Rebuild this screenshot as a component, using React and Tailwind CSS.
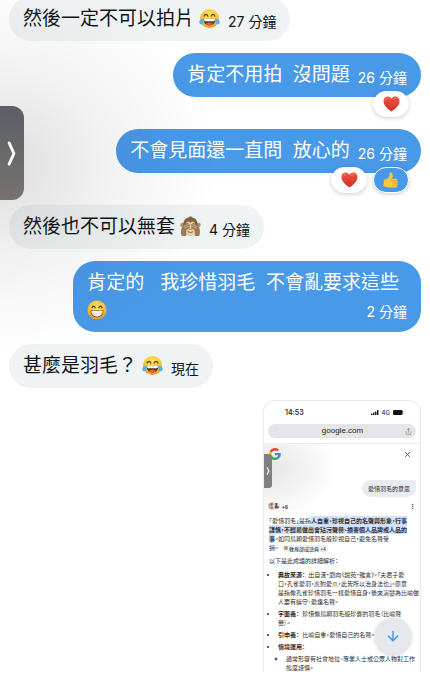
import clsx from "clsx";
import { ArrowDown, EllipsisVertical, Share, X } from "lucide-react";

function FaceGradient({ id }) {
  return (
    <defs>
      <radialGradient id={id} cx="50%" cy="35%" r="65%">
        <stop offset="0" stopColor="#ffe56b" />
        <stop offset="0.6" stopColor="#fcc934" />
        <stop offset="1" stopColor="#e8952b" />
      </radialGradient>
    </defs>
  );
}

function JoyEmoji({ className }) {
  return (
    <svg viewBox="0 0 42 40" className={className} role="img" aria-label="joy">
      <FaceGradient id="joy-face" />
      <circle cx="21" cy="20" r="19" fill="url(#joy-face)" />
      <path d="M10 15.500c2-5 6-5 8 0M24 15.500c2-5 6-5 8 0" fill="none" stroke="#653b12" strokeWidth="2.400" strokeLinecap="round" />
      <path d="M9 20.500h24c0 8-5 13.500-12 13.500S9 28.500 9 20.500z" fill="#5b3412" />
      <path d="M10 20.500h22c0 3-1 4.500-2 5H12c-1-.5-2-2-2-5z" fill="#fff" />
      <path d="M14 31c4-4 10-4 14 0-4 4-10 4-14 0z" fill="#e65848" />
      <path d="M9 20c-6 1-8.500 4-8.500 7.500S5 33 7.500 30.500 9 24 9 20z" fill="#4fb4ec" />
      <path d="M33 20c6 1 8.500 4 8.500 7.500S37 33 34.500 30.500 33 24 33 20z" fill="#4fb4ec" />
    </svg>
  );
}

function GrinEmoji({ className }) {
  return (
    <svg viewBox="0 0 40 40" className={className} role="img" aria-label="grin">
      <FaceGradient id="grin-face" />
      <circle cx="20" cy="20" r="19" fill="url(#grin-face)" />
      <path d="M10 15.500c1.500-4.500 5-4.500 6.500 0M23.500 15.500c1.500-4.500 5-4.500 6.500 0" fill="none" stroke="#653b12" strokeWidth="2.600" strokeLinecap="round" />
      <path d="M7 20.500h26c0 9-5 14-13 14s-13-5-13-14z" fill="#734113" />
      <path d="M8.500 21.500h23c-.5 7-4.500 11.500-11.500 11.500S9 28.500 8.500 21.500z" fill="#fff" />
      <path d="M9.500 26.500h21M14.500 22v9.500M20 22v11M25.500 22v9.500" stroke="#c9c4bc" strokeWidth="0.800" />
    </svg>
  );
}

function MonkeyEmoji({ className }) {
  return (
    <svg viewBox="0 0 40 40" className={className} role="img" aria-label="see no evil">
      <circle cx="4.500" cy="17" r="4" fill="#b8946c" />
      <circle cx="35.500" cy="17" r="4" fill="#b8946c" />
      <path d="M20 1c2 0 3 1 3 2 7 1 11 7 11 15 0 11-5 19-14 19S6 29 6 18C6 10 10 4 17 3c0-1 1-2 3-2z" fill="#80603f" />
      <path d="M11 17c0-7 6-8 9-4 3-4 9-3 9 4 0 4 3 7 3 11 0 6-6 9-12 9S8 34 8 28c0-4 3-7 3-11z" fill="#ecd0a0" />
      <path d="M3 38c-2-9-1-16 3-21l8-4c2 0 3 1 2 2l3 1c1 1 0 2-1 3l1 2-2 3-4 2c-2 3-1 8-1 12z" fill="#9c7a58" />
      <path d="M37 38c2-9 1-16-3-21l-8-4c-2 0-3 1-2 2l-3 1c-1 1 0 2 1 3l-1 2 2 3 4 2c2 3 1 8 1 12z" fill="#9c7a58" />
      <path d="M8 20l8-4M9 23l9-4M32 20l-8-4M31 23l-9-4" stroke="#d6b88c" strokeWidth="1.500" strokeLinecap="round" />
      <path d="M18 25h1M21.500 25h1" stroke="#5e4028" strokeWidth="1.500" strokeLinecap="round" />
      <path d="M15.500 30c3 2 6 2 9 0" fill="none" stroke="#704923" strokeWidth="1.500" strokeLinecap="round" />
    </svg>
  );
}

function HeartEmoji({ className }) {
  return (
    <svg viewBox="0 0 36 34" className={className} role="img" aria-label="heart">
      <defs>
        <linearGradient id="heart-fill" x1="0" y1="0" x2="0" y2="1">
          <stop offset="0" stopColor="#f0543f" />
          <stop offset="1" stopColor="#cf2f26" />
        </linearGradient>
      </defs>
      <path d="M18 33C10 27 1 20 1 11 1 5 5 1 10 1c4 0 6.500 2 8 5 1.500-3 4-5 8-5 5 0 9 4 9 10 0 9-9 16-17 22z" fill="url(#heart-fill)" />
      <path d="M5 9c1-3 3-5 6-4.500M22 8c1-2 3-3.500 6-3" fill="none" stroke="#f98a78" strokeWidth="1.800" strokeLinecap="round" />
    </svg>
  );
}

function ThumbEmoji({ className }) {
  return (
    <svg viewBox="0 0 36 36" className={className} role="img" aria-label="thumbs up">
      <path d="M2 18c4-1 8-2 10-5 3-4 3-7 3-11 4-2 7 1 7 6 0 3-1 5-1 7h8c4 0 4 5 1 5 5 0 4 5 1 5 3 0 3 4 0 5 2 1 1 5-2 5H15C9 35 6 32 1 32z" fill="#fcc93a" />
      <path d="M22 20h8M22 25h9M22 30h8M21 15c-3 1-4 3-3 5" fill="none" stroke="#dc8b25" strokeWidth="1.500" strokeLinecap="round" />
    </svg>
  );
}

function GoogleLogo() {
  return (
    <svg viewBox="0 0 48 48" className="size-3" role="img" aria-label="Google">
      <path fill="#EA4335" d="M24 9.500c3.540 0 6.710 1.220 9.210 3.600l6.850-6.850C35.900 2.380 30.470 0 24 0 14.620 0 6.510 5.380 2.560 13.220l7.980 6.190C12.430 13.720 17.740 9.500 24 9.500z" />
      <path fill="#4285F4" d="M46.980 24.550c0-1.570-.15-3.090-.38-4.550H24v9.020h12.940c-.58 2.960-2.260 5.480-4.780 7.180l7.730 6c4.510-4.180 7.090-10.360 7.090-17.650z" />
      <path fill="#FBBC05" d="M10.530 28.590c-.48-1.450-.76-2.990-.76-4.590s.27-3.140.76-4.590l-7.980-6.190C.92 16.460 0 20.120 0 24c0 3.880.92 7.540 2.560 10.780l7.970-6.190z" />
      <path fill="#34A853" d="M24 48c6.480 0 11.930-2.130 15.890-5.810l-7.730-6c-2.150 1.450-4.920 2.300-8.160 2.300-6.260 0-11.570-4.220-13.470-9.910l-7.980 6.190C6.510 42.620 14.620 48 24 48z" />
    </svg>
  );
}

function SourceBadge() {
  return (
    <svg viewBox="0 0 36 24" className="h-2 w-3 shrink-0" aria-hidden="true">
      <circle cx="12" cy="12" r="11.500" fill="#d9b9a4" />
      <path d="M4 9c4-5 9-4 12 0M6 16c3 3 6 3 9-1M11 7v6" stroke="#6d4939" strokeWidth="2.500" fill="none" />
      <circle cx="25" cy="12" r="10.500" fill="#ded9d5" />
      <path d="M22 3v9l-3 7h12l2-5-6-3 1-8" fill="#5c4e4a" />
    </svg>
  );
}

function PhoneStatus() {
  return (
    <div className="flex h-[23px] items-center justify-between pr-4 pl-[21px] font-['Inter',sans-serif]">
      <span className="text-[7px] leading-[9px] font-semibold">14:53</span>
      <div className="flex items-center gap-[3px]">
        <svg viewBox="0 0 16 10" className="h-[5px] w-2" aria-hidden="true">
          <path d="M0 7h3v3H0zM4 5h3v5H4zM8 3h3v7H8zM12 0h3v10h-3z" fill="#222" />
        </svg>
        <span className="text-[6px] leading-[9px] font-medium">4G</span>
        <svg viewBox="0 0 24 11" className="h-[5px] w-[11px]" aria-hidden="true">
          <rect width="21" height="11" rx="3" fill="#111" />
          <path d="M22.500 3.500v4" stroke="#999" strokeWidth="1.500" />
        </svg>
      </div>
    </div>
  );
}

const messages = [
  { text: "然後一定不可以拍片", Emoji: JoyEmoji, time: "27 分鐘" },
  { text: "肯定不用拍  沒問題", time: "26 分鐘", mine: true, reactions: ["heart"] },
  { text: "不會見面還一直問  放心的", time: "26 分鐘", mine: true, reactions: ["heart", "thumb"] },
  { text: "然後也不可以無套", Emoji: MonkeyEmoji, time: "4 分鐘" },
  { text: "肯定的   我珍惜羽毛  不會亂要求這些", Emoji: GrinEmoji, time: "2 分鐘", mine: true, long: true },
  { text: "甚麼是羽毛？", Emoji: JoyEmoji, time: "現在" },
];

function Reaction({ kind }) {
  return (
    <button
      type="button"
      className={clsx(
        "flex h-[26px] w-9 items-center justify-center rounded-full border shadow-[0_1px_4px_rgba(0,0,0,0.2)]",
        kind === "thumb" ? "border-white bg-[#4999e9]" : "border-white bg-white"
      )}
    >
      {kind === "thumb" ? <ThumbEmoji className="size-4" /> : <HeartEmoji className="h-4 w-[17px]" />}
    </button>
  );
}

function Message({ text, Emoji, time, mine, long, reactions }) {
  return (
    <li className={clsx("relative flex", mine && "justify-end", reactions && "mb-5")}>
      <div
        className={clsx(
          "flex pt-2 pb-[9px] pl-[14px]",
          long ? "flex-col rounded-[22px] pr-[22px]" : "items-end gap-2 rounded-full pr-[14px]",
          mine ? "bg-[#4999e9] text-white" : "bg-[#eff3f4] text-[#0f1419]"
        )}
      >
        <div className="flex items-center">
          <p className="text-[19px] leading-[27px] whitespace-pre-wrap">{text}</p>
          {Emoji && !long && <Emoji className="ml-[5px] size-[21px]" />}
        </div>
        {long ? (
          <div className="-mr-2 flex h-[27px] items-center justify-between">
            <Emoji className="size-5" />
            <time className="pt-1 text-sm">{time}</time>
          </div>
        ) : (
          <time className="text-sm leading-5">{time}</time>
        )}
      </div>
      {reactions && (
        <div className="absolute right-3 -bottom-5 flex gap-[6px]">
          {reactions.map((kind) => (
            <Reaction key={kind} kind={kind} />
          ))}
        </div>
      )}
    </li>
  );
}

function SearchShot() {
  return (
    <section className="relative ml-auto w-[158px] overflow-hidden rounded-t-xl border border-b-0 border-[#e9e9ea] bg-white font-['Noto_Sans_CJK_TC',sans-serif] text-[6px] leading-[9px] whitespace-nowrap text-[#2b2b2e]">
      <PhoneStatus />
      <div className="mx-1 flex h-[14px] items-center rounded-full bg-[#e4e5e8] pr-1 pl-3">
        <input
          type="text"
          readOnly
          aria-label="Address"
          value="google.com"
          className="min-w-0 flex-1 text-center font-['Liberation_Sans',sans-serif] text-[8px] leading-[10px] text-[#222]"
        />
        <button type="button" aria-label="Share">
          <Share className="size-[7px] text-[#777]" />
        </button>
      </div>

      <div className="mt-[5px] border-t border-[#ededed] bg-[radial-gradient(ellipse_75px_50px_at_0_25px,#e4e4e4,#ffffff)] pt-1">
        <div className="flex items-center justify-between pr-2 pl-[5px]">
          <GoogleLogo />
          <button type="button" aria-label="Close">
            <X className="size-[9px] text-[#333]" />
          </button>
        </div>
        <div className="mt-5 flex justify-end pr-1">
          <p className="rounded-full rounded-tr-sm bg-[#e8ebf0] px-[6px] py-1">愛惜羽毛的意思</p>
        </div>
        <div className="mt-1 flex h-[10px] items-center pr-1 pl-1">
          <SourceBadge />
          <span className="ml-[2px] text-[5px] font-bold">+6</span>
          <button type="button" aria-label="More" className="ml-auto">
            <EllipsisVertical className="size-[7px]" />
          </button>
        </div>
      </div>

      <div className="pt-[5px] pr-1 pl-[5px] [font-feature-settings:'palt']">
        <p>
          「愛惜羽毛」是指
          <mark className="bg-[#d3e0fb] font-bold text-inherit">
            人自重、珍視自己的名聲與形象，行事
            <br />
            謹慎，不輕易做出會玷污聲譽、損害個人品牌或人品的
            <br />事
          </mark>
          。如同鳥類愛惜羽毛般珍視自己，避免名聲受
          <br />
          損。
          <span className="ml-1 inline-flex items-center gap-[1px] rounded-full bg-[#eceef2] px-[2px] text-[5px] leading-[7px]">
            <i className="size-1 rounded-full bg-[#b78c78]" />
            教育部成語典 +4
          </span>
        </p>
        <p className="mt-1">以下是此成語的詳細解析：</p>
        <ul className="mt-[5px] list-disc space-y-[3px] pl-[9px]">
          <li>
            <strong className="mr-[2px]">典故來源：</strong> 出自漢·劉向《說苑·雜言》，「夫君子愛
            <br />
            口，孔雀愛羽，虎豹愛爪，此皆所以治身法也」。原意
            <br />
            是指像孔雀珍惜羽毛一樣愛惜自身，後來演變為比喻做
            <br />
            人要有操守、愛護名聲。
          </li>
          <li>
            <strong className="mr-[2px]">字面義：</strong> 珍惜像鳥類羽毛般珍貴的羽毛（比喻聲
            <br />
            譽）。
          </li>
          <li>
            <strong className="mr-[2px]">引申義：</strong> 比喻自重，愛惜自己的名聲。
          </li>
          <li>
            <strong>情境運用：</strong>
            <ul className="mt-[3px] list-[circle] pl-2">
              <li>
                通常形容有社會地位、專業人士或公眾人物對工作
                <br />
                態度謹慎。
              </li>
            </ul>
          </li>
        </ul>
      </div>

      <button
        type="button"
        aria-label="Expand"
        className="absolute top-[53px] left-0 flex h-[34px] w-2 items-center justify-center rounded-r-[3px] bg-[#808080]"
      >
        <svg viewBox="0 0 8 20" className="h-2 w-1" aria-hidden="true">
          <path d="M2 2l4 8-4 8" fill="none" stroke="#fff" strokeWidth="3" strokeLinecap="round" />
        </svg>
      </button>
    </section>
  );
}

export default function App() {
  return (
    <main className="relative min-h-screen overflow-hidden bg-white px-[9px] pb-[6px] font-['Inter','Noto_Sans_CJK_TC',sans-serif]">
      <ul className="-mt-[3px] flex flex-col gap-3">
        {messages.map((message) => (
          <Message key={message.text} {...message} />
        ))}
        <li className="relative">
          <SearchShot />
          <button
            type="button"
            aria-label="Scroll to latest"
            className="absolute right-[10px] bottom-[18px] flex size-9 items-center justify-center rounded-full bg-[#e5e9ed] text-[#3c91df] shadow-[0_1px_4px_rgba(0,0,0,0.2)]"
          >
            <ArrowDown className="size-4" strokeWidth={2} />
          </button>
        </li>
      </ul>

      {/* soft shade spreading from the side tab */}
      <div className="pointer-events-none absolute top-0 left-0 h-[360px] w-[240px] bg-[radial-gradient(ellipse_220px_190px_at_0_165px,rgba(0,0,0,0.13),rgba(0,0,0,0.05)_50%,transparent)]" />
      <button
        type="button"
        aria-label="Open side panel"
        className="absolute top-[106px] left-0 flex h-[94px] w-6 items-center justify-center rounded-r-xl bg-linear-to-b from-[#5b5f65] to-[#77726f]"
      >
        <svg viewBox="0 0 10 28" className="h-[27px] w-[10px]" aria-hidden="true">
          <path d="M2 3l5 11-5 11" fill="none" stroke="#fff" strokeWidth="3" strokeLinecap="round" strokeLinejoin="round" />
        </svg>
      </button>
    </main>
  );
}
